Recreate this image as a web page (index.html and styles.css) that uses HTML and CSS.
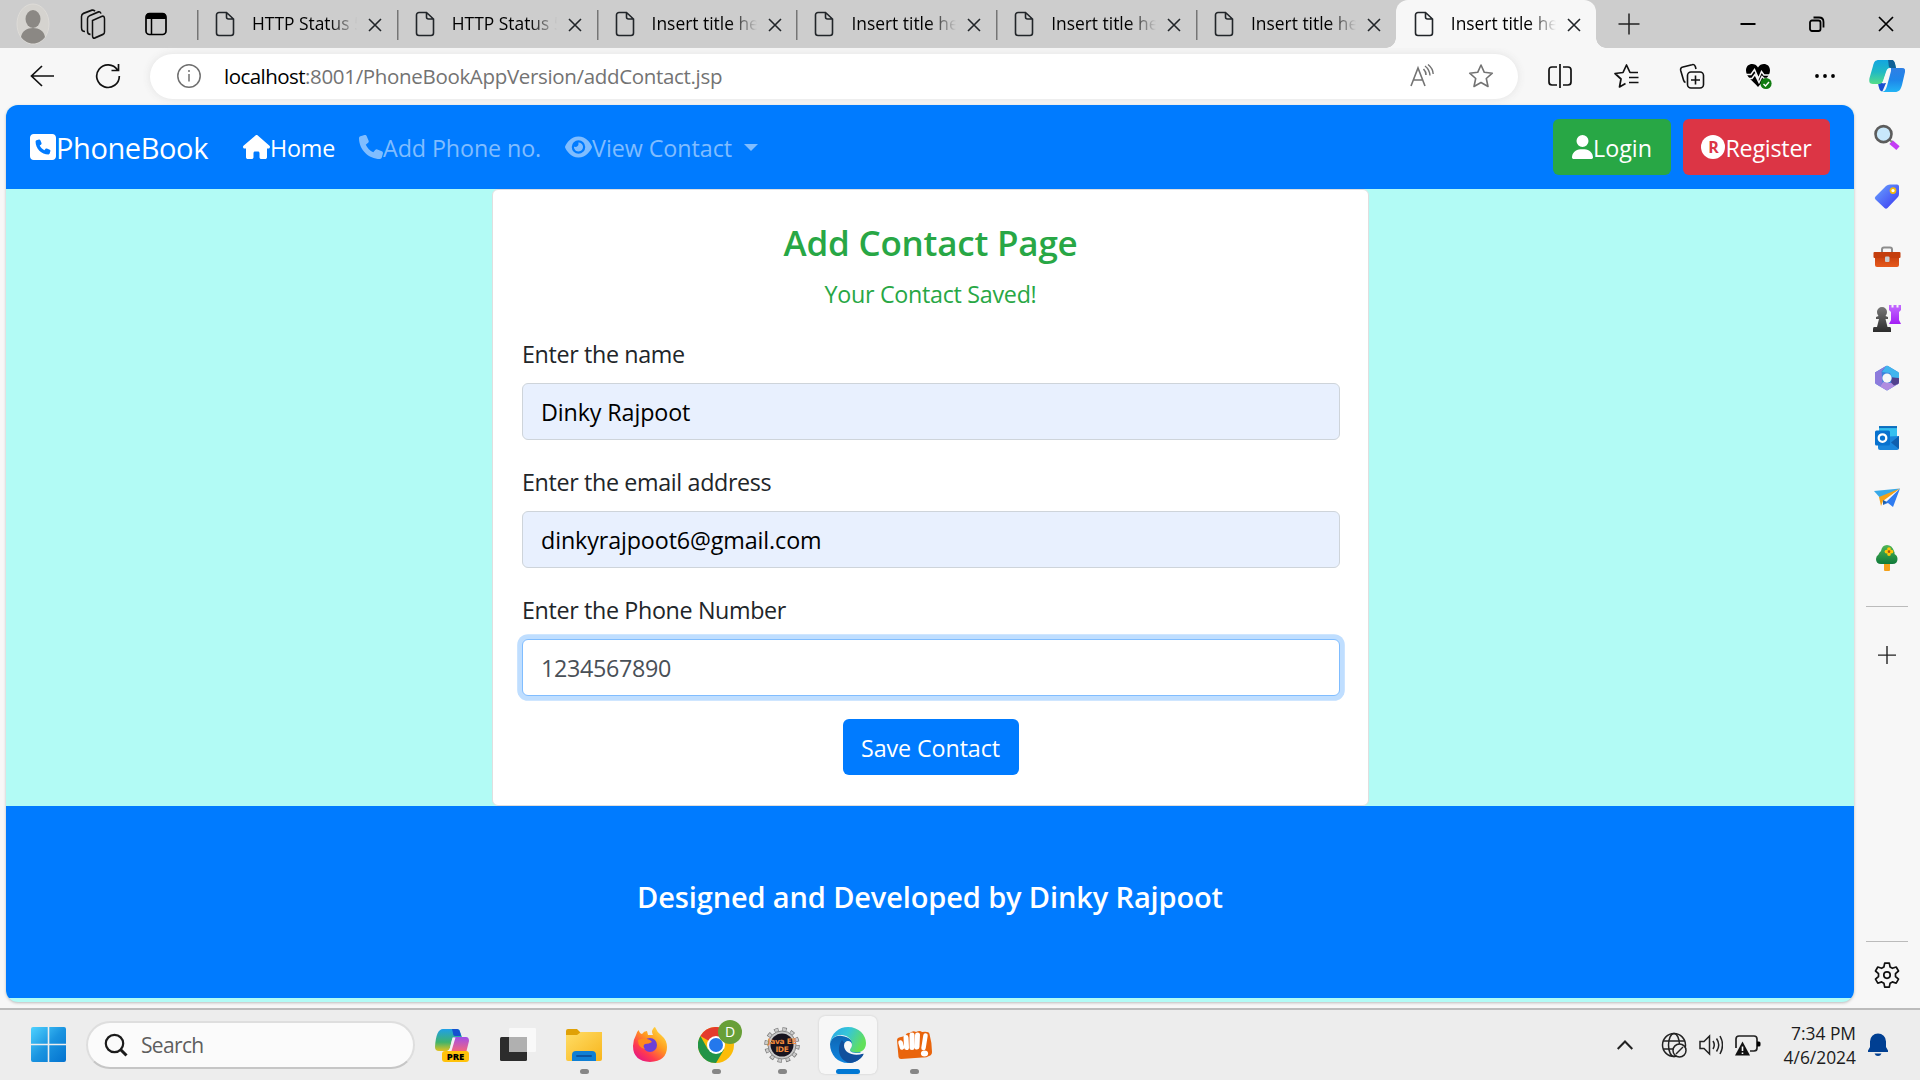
FILE: index.html
```html
<!DOCTYPE html>
<html lang="en">
<head>
<meta charset="utf-8">
<title>Insert title here</title>
<link rel="stylesheet" href="styles.css">
</head>
<body>
<svg class="defs" width="0" height="0">
  <defs>
    <symbol id="page" viewBox="0 0 20 26"><path d="M4 1.500h7.500L18.500 8v14a2.500 2.500 0 0 1-2.500 2.500H4A2.500 2.500 0 0 1 1.500 22V4A2.500 2.500 0 0 1 4 1.500zM11.500 1.500V6a2 2 0 0 0 2 2h5" fill="none" stroke="currentColor" stroke-width="1.600"/></symbol>
    <symbol id="cross" viewBox="0 0 14 14"><path d="M1 1l12 12M13 1L1 13" fill="none" stroke="currentColor" stroke-width="1.600"/></symbol>
    <linearGradient id="gWin" x1="0" y1="0" x2="1" y2="1"><stop offset="0" stop-color="#4fd2ff"/><stop offset=".5" stop-color="#1a94e0"/><stop offset="1" stop-color="#0372cf"/></linearGradient>
    <linearGradient id="gCopA" x1="0" y1="0" x2="0" y2="1"><stop offset="0" stop-color="#12a5e0"/><stop offset=".5" stop-color="#20b9c4"/><stop offset="1" stop-color="#55dd88"/></linearGradient>
    <linearGradient id="gCopB" x1="0" y1="0" x2="0" y2="1"><stop offset="0" stop-color="#2f7fe4"/><stop offset=".5" stop-color="#1e86ea"/><stop offset="1" stop-color="#22b4f5"/></linearGradient>
    <linearGradient id="gPreA" x1="0" y1="0" x2="0" y2="1"><stop offset="0" stop-color="#1f9fe8"/><stop offset=".6" stop-color="#3fb36d"/><stop offset="1" stop-color="#e2c21f"/></linearGradient>
    <linearGradient id="gPreB" x1="0" y1="0" x2="0" y2="1"><stop offset="0" stop-color="#a04fe8"/><stop offset="1" stop-color="#ff6a6f"/></linearGradient>
    <linearGradient id="gTag" x1="0" y1="0" x2="1" y2="1"><stop offset="0" stop-color="#6aa6ff"/><stop offset="1" stop-color="#3a35f0"/></linearGradient>
    <linearGradient id="gBox" x1="0" y1="0" x2="0" y2="1"><stop offset="0" stop-color="#c13b0c"/><stop offset="1" stop-color="#e75a1c"/></linearGradient>
    <linearGradient id="gPawn" x1="0" y1="0" x2="0" y2="1"><stop offset="0" stop-color="#777"/><stop offset="1" stop-color="#2b2b2b"/></linearGradient>
    <linearGradient id="gRook" x1="0" y1="0" x2="0" y2="1"><stop offset="0" stop-color="#c36bff"/><stop offset="1" stop-color="#a31df5"/></linearGradient>
    <linearGradient id="gTree" x1="0" y1="0" x2="0" y2="1"><stop offset="0" stop-color="#4fb657"/><stop offset="1" stop-color="#0f7a3a"/></linearGradient>
    <linearGradient id="gFold" x1="0" y1="0" x2="1" y2="1"><stop offset="0" stop-color="#ffdd66"/><stop offset="1" stop-color="#f8b51c"/></linearGradient>
    <linearGradient id="gFox" x1="1" y1="0" x2="0.200" y2="1"><stop offset="0" stop-color="#fff04a"/><stop offset=".45" stop-color="#ff9a1f"/><stop offset=".75" stop-color="#ff3b4e"/><stop offset="1" stop-color="#e3148a"/></linearGradient>
    <linearGradient id="gEdgeT" x1="0" y1="0" x2="1" y2="0.400"><stop offset="0" stop-color="#2aa5ea"/><stop offset=".5" stop-color="#36c6d8"/><stop offset="1" stop-color="#62e05a"/></linearGradient>
    <linearGradient id="gEdgeB" x1="0" y1="0" x2="0" y2="1"><stop offset="0" stop-color="#0f66b4"/><stop offset="1" stop-color="#0f86e0"/></linearGradient>
  </defs>
</svg>

<header class="tabstrip">
  <div class="strip-tools">
    <svg width="34" height="42" viewBox="0 0 34 42"><ellipse cx="17" cy="21" rx="16" ry="20" fill="#d5d3cf" stroke="#dedcd8"/><ellipse cx="17" cy="16" rx="7.500" ry="9" fill="#8b8884"/><path d="M5 34c1-6 6-9 12-9s11 3 12 9c-3 4-7 6.500-12 6.500S8 38 5 34z" fill="#8b8884"/></svg>
    <svg width="26" height="30" viewBox="0 0 26 26" preserveAspectRatio="none" fill="none" stroke="#111" stroke-width="1.500"><path d="M12.500 10l9-3.500q3-1 3 2V20q0 1.500-1.500 2l-8 3q-2.500.8-2.500-2z"/><path d="M10.500 22q-3 0-3-3V8.500q0-2 2-2.700l9-3.300q2-.5 2.500 1.500"/><path d="M5 19.500q-3.500 0-3.500-3.500V6.500q0-2 2-2.700L12 1q2-.5 3 1"/></svg>
    <svg width="22" height="24" viewBox="0 0 22 24"><rect x="1" y="1.500" width="20" height="21" rx="3.500" fill="none" stroke="#000" stroke-width="1.700"/><path d="M1 7V5q0-4 4-4h12q4 0 4 4v2z"/><path d="M6.500 7v15" stroke="#000" stroke-width="1.500"/></svg>
  </div>
  <div class="tabs">
    <div class="tab"><svg class="doc"><use href="#page"/></svg><span class="title">HTTP Status 500</span><svg class="x"><use href="#cross"/></svg></div>
    <div class="tab"><svg class="doc"><use href="#page"/></svg><span class="title">HTTP Status 500</span><svg class="x"><use href="#cross"/></svg></div>
    <div class="tab"><svg class="doc"><use href="#page"/></svg><span class="title">Insert title here</span><svg class="x"><use href="#cross"/></svg></div>
    <div class="tab"><svg class="doc"><use href="#page"/></svg><span class="title">Insert title here</span><svg class="x"><use href="#cross"/></svg></div>
    <div class="tab"><svg class="doc"><use href="#page"/></svg><span class="title">Insert title here</span><svg class="x"><use href="#cross"/></svg></div>
    <div class="tab"><svg class="doc"><use href="#page"/></svg><span class="title">Insert title here</span><svg class="x"><use href="#cross"/></svg></div>
    <div class="tab active"><svg class="doc"><use href="#page"/></svg><span class="title">Insert title here</span><svg class="x"><use href="#cross"/></svg></div>
  </div>
  <svg class="newtab" width="22" height="22" viewBox="0 0 22 22"><path d="M11 0.500v21M0.500 11h21" stroke="#222" stroke-width="1.500"/></svg>
  <div class="winctl">
    <svg width="16" height="16" viewBox="0 0 16 16"><path d="M0.500 8h15" stroke="#000" stroke-width="2"/></svg>
    <svg width="16" height="16" viewBox="0 0 16 16" fill="none" stroke="#000" stroke-width="1.800"><rect x="1" y="4.500" width="10.500" height="10.500" rx="2"/><path d="M4.500 1.500H10q4.500 0 4.500 4.500v5.500"/></svg>
    <svg width="16" height="16" viewBox="0 0 16 16"><path d="M1 1l14 14M15 1L1 15" stroke="#000" stroke-width="1.700"/></svg>
  </div>
</header>

<div class="toolbar">
  <div class="cell"><svg width="24" height="22" viewBox="0 0 24 22" fill="none" stroke="#111" stroke-width="1.700"><path d="M24 11H1.500M12 1L1.500 11 12 21"/></svg></div>
  <div class="cell"><svg width="26" height="26" viewBox="0 0 26 26" fill="none" stroke="#111" stroke-width="1.700"><path d="M22.500 7A11.300 11.300 0 1 0 24.300 13M23.500 1v6.500h-7"/></svg></div>
  <div class="address">
    <svg width="26" height="26" viewBox="0 0 26 26" fill="none" stroke="#707070" stroke-width="1.500"><circle cx="13" cy="13" r="11.200"/><path d="M13 11v7.500M13 7v2"/></svg>
    <span class="url"><b>localhost</b><span>:8001/PhoneBookAppVersion/addContact.jsp</span></span>
    <svg width="24" height="24" viewBox="0 0 24 24" fill="none" stroke="#737373" stroke-width="1.600"><path d="M1 22L8 4l7 18M3.500 16h9M13.500 5q2.500 2.500 2.500 6"/><path d="M15 2q4.500 3.500 5 9.500M18 .5q5 4 5.200 9.500" stroke-width="1.400"/></svg>
    <svg width="26" height="26" viewBox="0 0 26 26" fill="none" stroke="#737373" stroke-width="1.600" stroke-linejoin="round"><path d="M13 2l3.300 7.300 8 .9-6 5.300 1.700 8L13 19.500l-7 4 1.700-8-6-5.300 8-.9z"/></svg>
  </div>
  <div class="actions">
    <svg width="24" height="26" viewBox="0 0 24 26" fill="none" stroke="#111" stroke-width="1.700"><path d="M9 4H4Q1 4 1 7v12q0 3 3 3h5M15 4h5q3 0 3 3v12q0 3-3 3h-5M12 1v24"/></svg>
    <svg width="26" height="26" viewBox="0 0 26 26" fill="none" stroke="#111" stroke-width="1.700" stroke-linejoin="round"><path d="M25 9.500h-8L13.500 2l-3.500 7.500-8 1 6 5.500-1.500 8 6-3.500M16 14.500h9.500M16 19.500h9.500"/></svg>
    <svg width="26" height="26" viewBox="0 0 26 26" fill="none" stroke="#111" stroke-width="1.600"><rect x="8.500" y="9" width="16" height="16" rx="3.500"/><path d="M16.500 12.500v9M12 17h9M17 6l-.7-2.500Q15.500 1 13 1.700L4 4Q1 4.700 1.700 7.500L4.500 17q.5 2 2 2.500"/></svg>
    <svg width="28" height="28" viewBox="0 0 28 28"><path d="M13 25C8 19 1 15 1 8.500 1 1 10 0 13 5.500 16 0 25 1 25 8.500 25 15 18 19 13 25z"/><path d="M0 12.500h6l3.500-5 4 9 3-7 2.500 3.500h7M3 16.500h4l3-4 4 8 3-6 2 2h6" fill="none" stroke="#f7f7f7" stroke-width="1.500"/><circle cx="21" cy="21.500" r="5.600" fill="#107c10"/><path d="M18.500 22l2 2 3.500-4" fill="none" stroke="#fff" stroke-width="1.400"/></svg>
    <svg width="20" height="6" viewBox="0 0 20 6"><circle cx="2" cy="3" r="1.900"/><circle cx="10" cy="3" r="1.900"/><circle cx="18" cy="3" r="1.900"/></svg>
  </div>
  <div class="copilot"><svg width="36" height="34" viewBox="0 0 36 34"><path d="M9 24h8l-3 7q-.5 2-2 1-2-1-3-8z" fill="#1a4fd0"/><path d="M22 9h11q4 0 3 4l-3 13c-1.500 5-3 7-7 7H12c4 0 5-3 6-6l4-15z" fill="url(#gCopB)"/><path d="M10 1h12c2 0 3 1 4 4l1 4h-5c-3 0-4 1-5 4l-3 9c-1 2-2 3-4 3H4c-4 0-4-3-3.500-6L4 7c1-4 2-6 6-6z" fill="url(#gCopA)"/><path d="M19 1h4c2 0 3 2 4 8h-5c-3 0-2-4-3-8z" fill="#0f5f96"/><path d="M18.500 10q1-1 3.500-1l-4 13q-.7 2.500-4.500 2.500z" fill="#f7f7f7"/></svg></div>
</div>

<div class="body-row">
  <main class="page">
    <nav class="navbar">
      <a class="brand"><svg width="26" height="30" viewBox="0 0 448 512" fill="currentColor"><path d="M64 32C28.700 32 0 60.700 0 96V416c0 35.300 28.700 64 64 64H384c35.300 0 64-28.700 64-64V96c0-35.300-28.700-64-64-64H64zm90.700 96.700c9.700-2.600 19.900 2.300 23.700 11.600l20 48c3.400 8.200 1 17.600-5.800 23.200L168 231.700c16.600 35.200 45.100 63.700 80.300 80.300l20.200-24.700c5.600-6.800 15-9.200 23.200-5.800l48 20c9.300 3.900 14.200 14 11.600 23.700l-12 44C336.900 378 329 384 320 384C196.300 384 96 283.700 96 160c0-9 6-16.900 14.700-19.300l44-12z"/></svg><span>PhoneBook</span></a>
      <a class="link on"><svg width="27" height="24" viewBox="0 0 576 512" fill="currentColor"><path d="M575.800 255.500c0 18-15 32.100-32 32.100h-32l.7 160.200c0 2.700-.2 5.400-.5 8.100V472c0 22.100-17.900 40-40 40H392c-22.100 0-40-17.900-40-40V384c0-17.700-14.300-32-32-32H256c-17.700 0-32 14.300-32 32v88c0 22.100-17.900 40-40 40H104c-22.100 0-40-17.900-40-40V287.600H32c-18 0-32-14-32-32.100c0-9 3-17 10-24L266.400 8c7-7 15-8 22-8s15 2 21 7L564.800 231.500c8 7 12 15 11 24z"/></svg><span class="t-home">Home</span></a>
      <a class="link"><svg width="24" height="24" viewBox="0 0 512 512" fill="currentColor"><path d="M164.900 24.600c-7.700-18.600-28-28.500-47.400-23.200l-88 24C12.100 30.200 0 46 0 64C0 311.400 200.600 512 448 512c18 0 33.800-12.100 38.600-29.500l24-88c5.300-19.400-4.600-39.700-23.200-47.400l-96-40c-16.300-6.800-35.200-2.100-46.300 11.600L304.700 368C234.300 334.700 177.300 277.700 144 207.300L193.300 167c13.700-11.200 18.400-30 11.600-46.300l-40-96z"/></svg><span class="t-add">Add Phone no.</span></a>
      <a class="link"><svg width="27" height="24" viewBox="0 0 576 512" fill="currentColor"><path d="M288 32c-80.800 0-145.500 36.800-192.600 80.600C48.600 156 17.300 208 2.500 243.700c-3.300 7.900-3.300 16.700 0 24.600C17.300 304 48.600 356 95.400 399.400C142.500 443.200 207.200 480 288 480s145.500-36.800 192.600-80.600c46.800-43.500 78.100-95.400 93-131.100c3.300-7.900 3.300-16.700 0-24.600c-14.900-35.700-46.200-87.700-93-131.100C433.500 68.800 368.800 32 288 32zM144 256a144 144 0 1 1 288 0 144 144 0 1 1 -288 0zm144-64c0 35.300-28.700 64-64 64c-7.100 0-13.900-1.200-20.300-3.300c-5.500-1.800-11.900 1.600-11.700 7.400c.3 6.900 1.300 13.800 3.200 20.700c13.700 51.200 66.400 81.600 117.600 67.900s81.600-66.400 67.900-117.600c-11.100-41.500-47.800-69.400-88.600-71.100c-5.800-.2-9.200 6.100-7.400 11.700c2.100 6.400 3.300 13.200 3.300 20.300z"/></svg><span class="t-view">View Contact</span><i class="caret"></i></a>
      <a class="btn green"><svg width="21" height="24" viewBox="0 0 448 512" fill="currentColor"><path d="M224 256A128 128 0 1 0 224 0a128 128 0 1 0 0 256zm-45.700 48C79.800 304 0 383.800 0 482.300C0 498.700 13.300 512 29.700 512H418.300c16.400 0 29.700-13.300 29.700-29.700C448 383.800 368.200 304 269.700 304H178.300z"/></svg><span>Login</span></a>
      <a class="btn red"><i class="reg">R</i><span class="t-reg">Register</span></a>
    </nav>
    <section class="card">
      <h4>Add Contact Page</h4>
      <p class="saved">Your Contact Saved!</p>
      <label>Enter the name</label>
      <div class="input filled">Dinky Rajpoot</div>
      <label>Enter the email address</label>
      <div class="input filled">dinkyrajpoot6@gmail.com</div>
      <label>Enter the Phone Number</label>
      <div class="input focus">1234567890</div>
      <button class="save">Save Contact</button>
    </section>
    <footer class="credit"><h5>Designed and Developed by Dinky Rajpoot</h5></footer>
  </main>
  <aside class="sidebar">
    <svg width="26" height="26" viewBox="0 0 26 26"><path d="M17 18l7 6" stroke="#c43cf5" stroke-width="5"/><path d="M15 15l3 3" stroke="#888" stroke-width="2"/><circle cx="9.500" cy="10" r="8" fill="#c8e8fb" stroke="#5c5c5c" stroke-width="2.600"/></svg>
    <svg width="26" height="26" viewBox="0 0 26 26"><path d="M12 2q1.500-1.500 4-1.500h7q2 0 2 2V10q0 2-1.500 3.500L13.500 24q-1.500 1.500-3 0L1.500 15.500q-1.500-1.500 0-3z" fill="url(#gTag)"/><circle cx="19" cy="6.500" r="2.500" fill="#fff" stroke="#f5b90a" stroke-width="1.700"/></svg>
    <svg width="28" height="22" viewBox="0 0 28 22"><path d="M9 7V3.500Q9 1.500 11 1.500h6q2 0 2 2V7" fill="none" stroke="#8d8d8d" stroke-width="2"/><rect x="2" y="8" width="24" height="13" rx="2" fill="url(#gBox)"/><rect x="0.500" y="6" width="27" height="6" rx="1" fill="#c43e0d"/><rect x="12" y="10.500" width="4.500" height="5.500" rx="1" fill="#c9cdd0"/></svg>
    <svg width="28" height="28" viewBox="0 0 28 28"><path d="M16 1h2.500v2.500h2V1h3v2.500h2V1H28v5l-2 2v8l2 4H16l2-4V8l-2-2z" fill="url(#gRook)"/><path d="M4 8a5 5 0 0 1 10 0q0 2.500-1.500 4l2.500 1v2h-2.500l2 8H17q1 0 1 2v3H0v-3q0-2 1-2h3l2-8H3v-2l2.500-1Q4 10.500 4 8z" fill="url(#gPawn)"/></svg>
    <svg width="24" height="26" viewBox="0 0 24 26"><path d="M0 7.500L11 1q1-.6 2 0l10 6q1 .6 1 2v8q0 1.500-1 2l-10 6q-1 .6-2 0L1 19q-1-.6-1-2z" fill="#3d83dc"/><path d="M11 1q1-.6 2 0l10 6q1 .6 1 2v5l-7-2-2-4-8-1z" fill="#41b5ee"/><path d="M0 7.500L11 1 6.500 6.500 7.500 17 5 21.300 1 19q-1-.6-1-2z" fill="#8d7bdc"/><path d="M5 21.300L8 17l8 1 8-4v3q0 1.500-1 2l-10 6q-1 .6-2 0z" fill="#b08ce0"/><path d="M24 13v4q0 1.500-1 2l-4 1.500-3-3 1-5z" fill="#50418e"/><circle cx="12" cy="13" r="4.600" fill="#f7f7f7"/></svg>
    <svg width="24" height="24" viewBox="0 0 24 24"><rect x="4" y="0" width="18" height="12" fill="#35c0f0"/><path d="M4 0h18v2H4z" fill="#0f6cbd"/><path d="M3 11l21-1v12q0 2-2 2H5q-2 0-2-2z" fill="#1a86dc"/><path d="M24 10v13l-8-6.500z" fill="#0f5fae"/><rect x="0" y="4.500" width="15" height="15" rx="1.500" fill="#0872cf"/><circle cx="7.500" cy="12" r="3.800" fill="none" stroke="#fff" stroke-width="2.300"/></svg>
    <svg width="26" height="20" viewBox="0 0 26 20"><path d="M0 3L26 .5 8 12z" fill="#38a9e8"/><path d="M26 .5L19 19l-5-4-5 2z" fill="#2f7cf0"/><path d="M26 .5L5 9l2 9 2-5z" fill="#f5a216"/><path d="M9 12v5l4-3z" fill="#1d5fa8"/></svg>
    <svg width="22" height="28" viewBox="0 0 22 28"><rect x="8" y="18" width="6" height="9" rx="1" fill="#f4a11a"/><path d="M5 7Q6 1 11 1t7 6q1 2 .5 3 3 1.500 3 5 0 5-5 5H5q-5 0-5-5 0-3 2.500-4.500Q3 8.500 5 7z" fill="url(#gTree)"/><g fill="#ffc50a"><circle cx="13" cy="5" r="1.900"/><circle cx="13" cy="10" r="1.900"/><circle cx="10.500" cy="7.500" r="1.900"/><circle cx="15.500" cy="7.500" r="1.900"/></g><circle cx="13" cy="7.500" r="1.300" fill="#b4520d"/></svg>
    <hr>
    <svg class="plus" width="18" height="18" viewBox="0 0 18 18"><path d="M9 0v18M0 9h18" stroke="#222" stroke-width="1.400"/></svg>
    <hr class="low">
    <svg class="gear" width="26" height="26" viewBox="0 0 26 26" fill="none" stroke="#111" stroke-width="1.700" stroke-linejoin="round"><path d="M10.700 1h4.600l.8 3.900 2.300 1.300 3.800-1.300 2.300 4-3 2.700v2.800l3 2.700-2.300 4-3.800-1.300-2.300 1.300-.8 3.900h-4.600l-.8-3.900-2.300-1.300-3.800 1.300-2.300-4 3-2.700v-2.800l-3-2.700 2.300-4 3.800 1.300 2.300-1.300z"/><circle cx="13" cy="13" r="3.200"/></svg>
  </aside>
</div>

<div class="taskbar">
  <svg class="start" width="35" height="35" viewBox="0 0 35 35"><path d="M2 0h14.700v16.700H0V2q0-2 2-2zM18.300 0H33q2 0 2 2v14.700H18.300zM0 18.300h16.700V35H2q-2 0-2-2zM18.300 18.300H35V33q0 2-2 2H18.300z" fill="url(#gWin)"/></svg>
  <div class="search"><svg width="24" height="24" viewBox="0 0 24 24" fill="none" stroke="#1b1b1b" stroke-width="2.200"><circle cx="10.500" cy="10.500" r="8.700"/><path d="M16.500 16.500l6 6" stroke-width="3"/></svg><span>Search</span></div>
  <div class="apps">
    <div class="app pre"><svg width="36" height="34" viewBox="0 0 36 34"><path d="M9 1h14q3 0 3 3l2 5h-7q-2 0-3 3l-2 8q-1 3-4 3H5q-4 0-4-4Q2 1 9 1z" fill="url(#gPreA)"/><path d="M18 1h5q3 0 4 7h-6q-2 0-2-3z" fill="#1650cf"/><path d="M20 9h12q3 0 3 4l-3 12H15z" fill="url(#gPreB)"/><path d="M18.500 9.500h3L17.500 23h-4q2-1 2.500-3z" fill="#f3f0f5"/></svg><em>PRE</em></div>
    <div class="app"><svg width="36" height="36" viewBox="0 0 36 36"><rect x="0" y="10" width="27" height="24" rx="1.500" fill="#2c2c2c"/><rect x="9" y="1" width="27" height="24" rx="1" fill="#fafafa" opacity=".9"/><path d="M9 10h18v15H9z" fill="#b0b0b0"/></svg></div>
    <div class="app run"><svg width="36" height="36" viewBox="0 0 36 36"><path d="M0 4q0-2 2-2h9l4 4-4 4H0z" fill="#e0a106"/><path d="M0 8h11l4-3h21v27q0 2-2 2H2q-2 0-2-2z" fill="url(#gFold)"/><path d="M6 34v-6q0-4 4-4h16q4 0 4 4v6z" fill="#0f7fd4"/><path d="M11 29h14" stroke="#0b54a0" stroke-width="2" stroke-linecap="round"/></svg></div>
    <div class="app"><svg width="36" height="36" viewBox="0 0 36 36"><path d="M4 8q1-4 3-5 0 3 3 4 2-3 5-3l1 4h5q-2-4 0-6 1-2 2-2 2 5 6 8 6 5 6 12 0 14-17 15Q1 34 1 19q0-6 3-11z" fill="url(#gFox)"/><circle cx="18" cy="18" r="7" fill="#6d3fd8"/><path d="M6 13q6-3 12 0l2 2q-3 2-7 2-3 2 0 5-7-1-7-9z" fill="#ff8a1c"/></svg></div>
    <div class="app run"><svg width="36" height="36" viewBox="0 0 36 36"><circle cx="18" cy="18" r="18" fill="#fbbc09"/><path d="M18 18L2.400 9A18 18 0 0 1 33.600 9z" fill="#e33b2e"/><path d="M2.400 9A18 18 0 0 0 18 36l8-13.500L18 18l-8 4.500z" fill="#229447"/><circle cx="18" cy="18" r="9" fill="#fff"/><circle cx="18" cy="18" r="7" fill="#2478ec"/></svg><em class="who">D</em></div>
    <div class="app run eclipse"><svg width="36" height="36" viewBox="0 0 36 36"><circle cx="18" cy="18" r="15.500" fill="none" stroke="#777" stroke-width="4.500" stroke-dasharray="4.200 3.910"/><circle cx="18" cy="18" r="15.500" fill="none" stroke="#ccc" stroke-width="3" stroke-dasharray="3 5.110" stroke-dashoffset="-.6"/><circle cx="18" cy="18" r="14" fill="#c9c9c9" stroke="#888"/><circle cx="18" cy="18" r="11.500" fill="#17141f"/></svg><em>Java EE<br>IDE</em></div>
    <div class="app run current"><svg width="36" height="36" viewBox="0 0 36 36"><path d="M0 17C1 11 6 8 12 9c7 1 12 5 11 10l10 8.500C30 33 25 36 18 36 8 36 0 28 0 17z" fill="url(#gEdgeB)"/><path d="M12 13C6 21 9 34 20 36c6-.5 11-4 13.500-8.500q.3-1.500-1-1C24 29 16 25 16 18z" fill="#114f9c"/><path d="M0 17C1 6 9 0 18 0c11 0 18 8 18 16 0 6-4 9.500-9 9.500-4 0-7-1-7-2.500 0-2 2-2 2-6 0-5-5-9-11-9C5 8 1 12 0 17z" fill="url(#gEdgeT)"/><path d="M14 18.500c0-3 2-4.500 4-4.500s4 1.500 4 4-2 3.500-2 5c0 2 3 3 7 3 2 0 4-.5 6-1.500l.5 2C24 30 14 26 14 18.500z" fill="#f7f7f7"/></svg></div>
    <div class="app run"><svg width="36" height="30" viewBox="0 0 36 30"><path d="M1 10q0-2 2-2.500L9 6q2-4 5-3 3-3 6-1 4-2 6 0 7-1 7.500 2Q36 13 36 22q0 3-3 4-3 2-7 1.500L5 29q-2 0-2.500-2z" fill="#e9640c"/><g stroke="#fff" stroke-linecap="round" fill="none"><path d="M4.500 12.500l1.500 5" stroke-width="4.500"/><path d="M10 7.500l.5 10M16 5v12.500M21.500 5l-.5 12" stroke-width="5"/><path d="M29.500 5.500L27.500 18" stroke-width="4.500"/></g><ellipse cx="28.500" cy="23.500" rx="3.600" ry="3" fill="#fff"/></svg></div>
  </div>
  <div class="tray">
    <svg width="16" height="10" viewBox="0 0 16 10" fill="none" stroke="#222" stroke-width="2"><path d="M.7 9L8 1.500 15.300 9"/></svg>
    <svg class="globe" width="26" height="26" viewBox="0 0 26 26" fill="none" stroke="#222" stroke-width="1.500"><circle cx="13" cy="13" r="11.500"/><ellipse cx="13" cy="13" rx="5.500" ry="11.500"/><path d="M2.500 9h21M2.500 17h12"/><circle cx="18.500" cy="18.500" r="6.500" fill="#ededed"/><path d="M15 22l7-7"/></svg>
    <svg width="24" height="22" viewBox="0 0 24 22" fill="none" stroke="#222" stroke-width="1.500"><path d="M1 7.500h4L10.500 2v18L5 14.500H1zM14 7q2.500 4 0 8M17.500 4.500q4.500 6.500 0 13M21 2q5 9 0 18"/></svg>
    <svg width="26" height="22" viewBox="0 0 26 22"><path d="M1 14V5q0-3 3-3h15q3 0 3 3v9q0 3-3 3h-4" fill="none" stroke="#222" stroke-width="1.700"/><path d="M22 7.500h2q1.500 0 1.500 1.500v2q0 1.500-1.500 1.500h-2z"/><path d="M7.500 7.500L15 21.500H0z" fill="#111"/><path d="M7.500 12.500v4.500M7.500 18.500v1.500" stroke="#fff" stroke-width="1.600"/></svg>
  </div>
  <div class="clock"><span>7:34 PM</span><span>4/6/2024</span></div>
  <svg class="bell" width="20" height="24" viewBox="0 0 20 24" fill="#003f92"><path d="M2 8.500a8 8 0 0 1 16 0V14l2 3.500V19H0v-1.500L2 14zM6.500 20.500h7q-1 2.500-3.500 2.500t-3.500-2.500z"/></svg>
</div>
</body>
</html>
```
FILE: styles.css
```css
* { box-sizing: border-box; }
body {
  margin: 0;
  width: 1920px;
  height: 1080px;
  overflow: hidden;
  display: flex;
  flex-direction: column;
  background: #f7f7f7;
  font-family: "Open Sans", "Noto Sans", sans-serif;
  font-size: 23.3px;
  color: #212529;
  white-space: nowrap;
}
svg { display: block; flex: none; }
.defs { position: absolute; }
em, i { font-style: normal; }

.tabstrip { height: 48px; background: #cdcdcd; display: flex; align-items: center; }
.strip-tools { width: 197px; flex: none; display: flex; align-items: center; padding-left: 16px; gap: 30px; }
.strip-tools svg:nth-child(3) { margin-left: 9px; }
.tabs { display: flex; align-self: stretch; }
.tab {
  width: 199.8px;
  display: flex;
  align-items: center;
  padding-left: 18px;
  background: linear-gradient(#757575, #757575) 0 10px / 1.5px 30px no-repeat;
}
.tab.active {
  background: #f7f7f7;
  border-radius: 12px 12px 0 0;
  position: relative;
}
.tab.active::before, .tab.active::after {
  content: "";
  position: absolute;
  bottom: 0;
  width: 10px;
  height: 10px;
}
.tab.active::before { left: -10px; background: radial-gradient(circle at 0 0, transparent 9.5px, #f7f7f7 10px); }
.tab.active::after { right: -10px; background: radial-gradient(circle at 100% 0, transparent 9.5px, #f7f7f7 10px); }
.doc { width: 20px; height: 26px; }
.title {
  width: 105px;
  margin: -2px 0 0 17px;
  overflow: hidden;
  font-size: 17.4px;
  line-height: 26px;
  color: #000;
  -webkit-mask-image: linear-gradient(90deg, #000 74%, transparent 100%);
  mask-image: linear-gradient(90deg, #000 74%, transparent 100%);
}
.x { width: 14px; height: 14px; margin: 2px 0 0 11px; }
.newtab { margin: 0 0 1px 22px; }
.winctl { display: flex; gap: 53px; margin: 0 0 1px 100px; }

.toolbar { height: 57px; display: flex; align-items: center; padding: 0 0 1px 9px; }
.cell { width: 66px; display: flex; justify-content: center; }
.address {
  width: 1368px;
  height: 45px;
  margin-left: 9px;
  padding: 0 24px 0 26px;
  border-radius: 23px;
  background: #fff;
  box-shadow: 0 0 8px #e2e2e2;
  display: flex;
  align-items: center;
}
.url { flex: 1; margin-left: 22px; font-size: 20.5px; letter-spacing: -0.33px; color: #737373; }
.url b { font-weight: 400; letter-spacing: -0.54px; color: #000; }
.address svg:nth-child(4) { margin-left: 34px; }
.actions { width: 331px; margin-left: 9px; display: grid; grid-template-columns: repeat(5, 1fr); place-items: center; }
.copilot { width: 58px; display: flex; justify-content: center; }

.body-row { display: flex; height: 903px; padding-left: 6px; }
.page {
  width: 1848px;
  height: 897px;
  background: #b2fbf5;
  border-radius: 12px;
  overflow: hidden;
  box-shadow: 0 1px 3px #bbb;
  display: flex;
  flex-direction: column;
}
.navbar { height: 84px; background: #007bff; color: #fff; display: flex; align-items: center; padding: 0 24px; }
.navbar span { position: relative; top: 1px; }
.brand { display: flex; align-items: center; width: 178px; font-size: 29px; letter-spacing: -0.4px; }
.brand span { top: 0; }
.link { display: flex; align-items: center; margin-left: 24px; color: #80bdff; }
.link.on { color: #fff; margin-left: 35px; }
.t-home { letter-spacing: -0.2px; }
.t-add { letter-spacing: -0.11px; }
.t-view { letter-spacing: -0.06px; }
.t-reg { letter-spacing: -0.25px; }
.caret { border: 7px solid transparent; border-top-color: currentColor; border-bottom: 0; margin-left: 12px; }
.btn { height: 56px; border-radius: 6px; display: flex; align-items: center; justify-content: center; }
.green { width: 118px; background: #28a745; margin-left: auto; }
.red { width: 147px; background: #dc3545; margin-left: 12px; }
.reg {
  width: 24px;
  height: 24px;
  border-radius: 50%;
  background: #fff;
  color: #dc3545;
  font-size: 16px;
  font-weight: 700;
  line-height: 24px;
  text-align: center;
}

.card {
  width: 877px;
  height: 617px;
  margin-left: 486px;
  padding: 29px;
  background: #fff;
  border: 1px solid #dfdfdf;
  border-radius: 6px;
  display: flex;
  flex-direction: column;
  align-items: flex-start;
}
h4, h5, p { margin: 0; }
h4 { align-self: center; font-size: 35px; font-weight: 600; letter-spacing: -0.21px; line-height: 44px; color: #28a745; margin-top: 2px; }
.saved { align-self: center; letter-spacing: -0.29px; line-height: 36px; margin-top: 11px; color: #28a745; }
label { line-height: 36px; margin-top: 24px; letter-spacing: -0.36px; }
.input {
  width: 818px;
  height: 57px;
  margin-top: 11px;
  padding: 0 18px;
  border: 1px solid #ced4da;
  border-radius: 6px;
  line-height: 57px;
  letter-spacing: -0.12px;
  background: #fff;
}
.filled { background: #e8f0fe; color: #000; }
.focus { border-color: #80bdff; box-shadow: 0 0 0 4.8px #bfdeff; color: #495057; letter-spacing: -0.32px; }
.save {
  align-self: center;
  width: 176px;
  height: 56px;
  margin-top: 23px;
  padding: 2px 0 0;
  border: 0;
  border-radius: 6px;
  background: #007bff;
  color: #fff;
  font: inherit;
  letter-spacing: -0.1px;
}
.credit { height: 192px; background: #007bff; color: #fff; display: flex; justify-content: center; padding-top: 72px; }
h5 { font-size: 29px; font-weight: 600; letter-spacing: -0.13px; line-height: 38px; }

.sidebar { width: 66px; height: 903px; display: flex; flex-direction: column; align-items: center; padding-top: 2px; }
.sidebar > svg { height: 60.2px; }
.sidebar hr { width: 42px; height: 1px; margin: 17px 0 0; border: 0; background: #bbb; }
.sidebar .plus { margin-top: 18px; }
.sidebar .low { margin-top: 256px; }
.sidebar .gear { margin-top: 3px; }

.taskbar { height: 72px; border-top: 2px solid #bcbcbc; background: #ededed; display: flex; align-items: center; padding: 0 0 1px 31px; }
.start { margin-right: 20px; }
.search {
  width: 329px;
  height: 48px;
  padding-left: 16px;
  border: 2px solid #dedede;
  border-bottom-color: #c6c6c6;
  border-radius: 24px;
  background: #fbfbfb;
  display: flex;
  align-items: center;
  gap: 13px;
  font-size: 21px;
  letter-spacing: -0.65px;
  color: #5e5e5e;
}
.apps { display: flex; margin-left: 4px; height: 58px; }
.app { width: 66px; display: flex; align-items: center; justify-content: center; position: relative; }
.run::after {
  content: "";
  position: absolute;
  bottom: 0;
  left: 29px;
  width: 9px;
  height: 5px;
  border-radius: 3px;
  background: #868686;
}
.current { width: 58px; margin: 0 4px; background: #f7f7f7; border-radius: 6px; box-shadow: 0 0 2px #c6c6c6; }
.current::after { left: 17px; width: 24px; background: #0078d4; }
.pre em {
  position: absolute;
  left: 23px;
  top: 35px;
  width: 27px;
  height: 11px;
  border-radius: 3px;
  background: #ffc20a;
  color: #000;
  font-size: 9.5px;
  font-weight: 800;
  line-height: 11px;
  text-align: center;
}
.who {
  position: absolute;
  left: 35px;
  top: 4px;
  width: 24px;
  height: 24px;
  border-radius: 50%;
  background: #689f38;
  color: #fff;
  font-size: 14px;
  line-height: 24px;
  text-align: center;
}
.eclipse em {
  position: absolute;
  left: 17px;
  top: 22px;
  width: 32px;
  color: #f08a3c;
  font: 700 7.5px/8px "DejaVu Sans", sans-serif;
  letter-spacing: -0.3px;
  text-align: center;
}
.tray { display: flex; align-items: center; margin-left: auto; gap: 12px; }
.globe { margin-left: 16px; }
.clock { width: 95px; display: flex; flex-direction: column; align-items: flex-end; font-size: 17.4px; line-height: 24px; color: #1c1c1c; }
.bell { margin: 0 32px 0 12px; }
```
